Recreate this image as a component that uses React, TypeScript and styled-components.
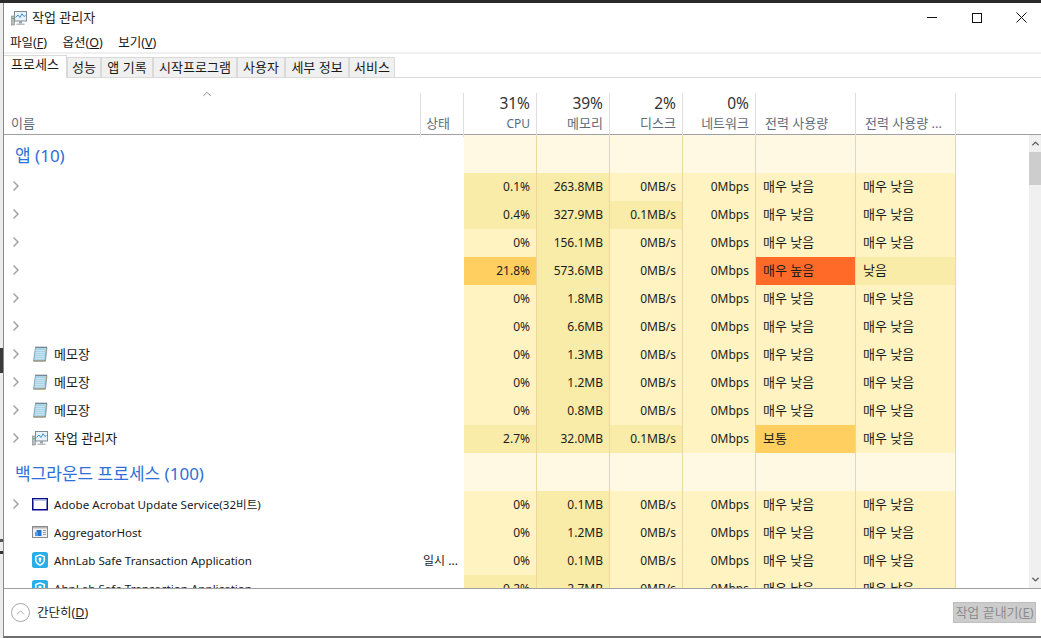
import React from "react";
import styled, { createGlobalStyle } from "styled-components";
import { ChevronRight, ChevronUp, ChevronDown } from "lucide-react";

const GlobalStyle = createGlobalStyle`
  html, body {
    margin: 0;
    padding: 0;
    background: #fff;
  }
  * {
    box-sizing: border-box;
  }
`;

const Screen = styled.div`
  width: 1041px;
  height: 638px;
  display: flex;
  overflow: hidden;
  font-family: "Noto Sans", "Noto Sans CJK KR", sans-serif;
  font-size: 12px;
  color: #1a1a1a;
  background: #2a2a2a;
  padding-top: 3px;
`;

const DesktopEdge = styled.div`
  width: 3px;
  flex: none;
  background: linear-gradient(
    to bottom,
    #ececec 0 345px,
    #3a3a3a 345px 370px,
    #ececec 370px 536px,
    #555 536px 539px,
    #ececec 539px 548px,
    #333 548px 551px,
    #ececec 551px
  );
`;

const Window = styled.div`
  flex: 1;
  min-width: 0;
  display: flex;
  flex-direction: column;
  background: #fff;
  border-left: 1px solid #8a8a8a;
  border-bottom: 2px solid #6e6e6e;
`;

const TitleBar = styled.div`
  height: 30px;
  flex: none;
  display: flex;
  align-items: center;
  padding-left: 7px;
`;

const TitleText = styled.span`
  margin: 0 0 4px 5px;
  font-size: 13px;
  color: #222;
`;

const WindowButtons = styled.div`
  margin: 0 -3px 2px auto;
  display: flex;
  align-items: center;
`;

const WindowButton = styled.div`
  width: 45px;
  height: 28px;
  display: flex;
  align-items: center;
  justify-content: center;
`;

const MenuBar = styled.div`
  height: 19px;
  flex: none;
  display: flex;
  align-items: center;
  gap: 15.5px;
  padding: 0 0 2px 6px;
  font-size: 12.5px;
`;

const MenuItem = styled.span`
  color: #1a1a1a;
`;

const Key = styled.span`
  text-decoration: underline;
`;

const TabStrip = styled.div`
  height: 26px;
  flex: none;
  display: flex;
  align-items: flex-end;
  border-top: 2px solid #f0f0f0;
  border-bottom: 1px solid #d9d9d9;
`;

const Tab = styled.div<{ $width: number; $active?: boolean }>`
  width: ${(p) => p.$width}px;
  height: ${(p) => (p.$active ? 23 : 20)}px;
  margin-bottom: ${(p) => (p.$active ? -1 : 0)}px;
  padding-bottom: ${(p) => (p.$active ? 0 : 2)}px;
  display: flex;
  align-items: ${(p) => (p.$active ? "flex-start" : "center")};
  justify-content: center;
  background: ${(p) => (p.$active ? "#fff" : "#f0f0f0")};
  border: 1px solid #d9d9d9;
  border-left-width: ${(p) => (p.$active ? 0 : 1)}px;
  border-bottom-width: 0;
  font-size: 13px;
  line-height: ${(p) => (p.$active ? 16 : 18)}px;
  white-space: nowrap;
  color: #1a1a1a;
`;

const Columns = styled.div`
  display: grid;
  grid-template-columns: 417px 43px 73px 73px 73px 73px 100px 100px 1fr;
`;

const Header = styled(Columns)`
  height: 57px;
  flex: none;
  padding-top: 15px;
  border-bottom: 1px solid #a0a0a0;
  position: relative;
`;

const SortCaret = styled.div`
  position: absolute;
  left: 196px;
  top: 9px;
  color: #7a8a9a;
  display: flex;
`;

const HeaderCell = styled.div<{ $left?: number; $right?: number; $plain?: boolean }>`
  display: flex;
  flex-direction: column;
  justify-content: flex-end;
  align-items: ${(p) => (p.$left ? "flex-start" : "flex-end")};
  padding: 0 ${(p) => p.$right ?? 6}px 5px ${(p) => p.$left ?? 0}px;
  border-right: ${(p) => (p.$plain ? "none" : "1px solid #dedede")};
`;

const HeaderPercent = styled.div`
  font-size: 15.5px;
  line-height: 20px;
  color: #333;
  margin-bottom: 2px;
`;

const HeaderLabel = styled.div<{ $latin?: boolean }>`
  font-size: ${(p) => (p.$latin ? 12 : 13)}px;
  line-height: 17px;
  color: #5f6b7a;
  white-space: nowrap;
`;

const Body = styled.div`
  flex: 1;
  min-height: 0;
  display: flex;
`;

const List = styled.div`
  flex: 1;
  min-width: 0;
  overflow: hidden;
`;

const GroupRow = styled(Columns)`
  height: 38px;
`;

const GroupTitle = styled.div`
  grid-column: 1 / 3;
  display: flex;
  align-items: center;
  padding-left: 11px;
  font-size: 17px;
  color: #2f6fd6;
`;

const Row = styled(Columns)`
  height: 28px;
`;

const NameCell = styled.div`
  display: flex;
  align-items: center;
  padding: 0 0 2px 6px;
  white-space: nowrap;
`;

const Chevron = styled.div<{ $hidden?: boolean }>`
  width: 13px;
  flex: none;
  display: flex;
  color: #a6a6a6;
  visibility: ${(p) => (p.$hidden ? "hidden" : "visible")};

  svg {
    flex: none;
    margin-left: -2.5px;
  }
`;

const IconSlot = styled.div`
  width: 16px;
  height: 16px;
  flex: none;
  margin-left: 9px;
  display: flex;
`;

const Name = styled.span<{ $korean?: boolean }>`
  margin: 0 0 ${(p) => (p.$korean ? 2 : 0)}px 6px;
  font-size: ${(p) => (p.$korean ? 13 : 11.6)}px;
`;

const StatusCell = styled.div`
  display: flex;
  align-items: center;
  padding: 0 0 2px 2px;
  font-size: 12px;
  white-space: nowrap;
`;

const DataCell = styled.div<{ $bg: string; $left?: boolean }>`
  display: flex;
  align-items: center;
  justify-content: ${(p) => (p.$left ? "flex-start" : "flex-end")};
  padding: ${(p) => (p.$left ? "0 0 4px 7px" : "0 6px 2px 0")};
  font-size: ${(p) => (p.$left ? 13 : 12)}px;
  background: ${(p) => p.$bg};
  border-right: 1px solid #ecd79c;
  white-space: nowrap;
  color: #1c1c1c;
`;

const Filler = styled.div``;

const ScrollBar = styled.div`
  width: 12px;
  flex: none;
  display: flex;
  flex-direction: column;
  background: #f0f0f0;
`;

const ScrollArrow = styled.div`
  height: 17px;
  flex: none;
  display: flex;
  align-items: center;
  justify-content: center;
  color: #555;
`;

const ScrollThumb = styled.div`
  height: 33px;
  flex: none;
  background: #cdcdcd;
`;

const ScrollTrack = styled.div`
  flex: 1;
`;

const Footer = styled.div`
  height: 48px;
  flex: none;
  display: flex;
  align-items: center;
  padding: 0 5px 0 7px;
  border-top: 1px solid #a0a0a0;
`;

const CollapseCircle = styled.div`
  width: 19px;
  height: 19px;
  border: 1px solid #a8a8a8;
  border-radius: 50%;
  display: flex;
  align-items: center;
  justify-content: center;
  color: #a0a0a0;
`;

const FooterLink = styled.span`
  margin: 0 0 2px 7px;
  font-size: 12.5px;
  color: #222;
`;

const EndButton = styled.div`
  margin-left: auto;
  width: 83px;
  height: 21px;
  display: flex;
  align-items: center;
  justify-content: center;
  padding-bottom: 2px;
  background: #cccccc;
  border: 1px solid #bfbfbf;
  color: #8c8c8c;
  font-size: 13px;
  white-space: nowrap;
`;

const BASE = "#fff3c2";
const WARM = "#f9eba8";
const MID = "#ffd05f";
const HOT = "#ff6a28";
const GROUP = "#fff8e2";

const MinimizeIcon = () => (
  <svg width="11" height="11" viewBox="0 0 11 11">
    <path d="M0.5 5.5 H10.5" stroke="#111" strokeWidth="1" shapeRendering="crispEdges" />
  </svg>
);

const MaximizeIcon = () => (
  <svg width="11" height="11" viewBox="0 0 11 11">
    <rect x="1" y="1" width="9" height="9" fill="none" stroke="#111" strokeWidth="1" shapeRendering="crispEdges" />
  </svg>
);

const CloseIcon = () => (
  <svg width="11" height="11" viewBox="0 0 11 11">
    <path d="M0.5 0.5 L10.5 10.5 M10.5 0.5 L0.5 10.5" stroke="#111" strokeWidth="1" />
  </svg>
);

const TaskIcon = () => (
  <svg width="16" height="16" viewBox="0 0 16 16">
    <rect x="0.5" y="6" width="3" height="9" fill="#b9bec2" stroke="#7d8488" strokeWidth="0.6" />
    <rect x="1.2" y="8" width="1.6" height="1.2" fill="#55b04a" />
    <rect x="3.5" y="1.5" width="12" height="9.5" fill="#e8f2fa" stroke="#7f8c96" />
    <path d="M4.5 7.5 L7 5 L9 7.5 L11 3.8 L13 6.5 L14.5 5.5" fill="none" stroke="#3a8fd0" strokeWidth="1" />
    <rect x="8" y="11" width="3" height="2.5" fill="#9aa3aa" />
    <rect x="5.5" y="13.5" width="8" height="1.5" fill="#b6bcc1" />
  </svg>
);

const NotepadIcon = () => (
  <svg width="16" height="16" viewBox="0 0 16 16">
    <path d="M3.5 1.5 H15 L13.5 15 H1.5 Z" fill="#a9d3e6" stroke="#5f8ea6" strokeWidth="0.7" />
    <path d="M14.2 2 L14.8 2 L13.4 15.2 L12.6 15.2 Z" fill="#b99868" />
    <path d="M1.6 15 H13.4" stroke="#a58a5f" strokeWidth="1" />
    <path d="M3.6 4.5 H12.8 M3.4 6.5 H12.6 M3.2 8.5 H12.4 M3 10.5 H12.2 M2.8 12.5 H12" stroke="#cfe7f1" strokeWidth="0.8" />
    <path d="M3.5 1.2 H14.8" stroke="#5a5a5a" strokeWidth="1.2" strokeDasharray="1 1" />
  </svg>
);

const FrameIcon = () => (
  <svg width="16" height="16" viewBox="0 0 16 16">
    <rect x="0.75" y="2.75" width="14.5" height="11" fill="#fff" stroke="#0a0a8c" strokeWidth="1.5" />
    <rect x="1.5" y="3.5" width="13" height="1.5" fill="#b9c6e6" />
  </svg>
);

const HostIcon = () => (
  <svg width="16" height="16" viewBox="0 0 16 16">
    <rect x="0.5" y="2.5" width="15" height="11" fill="#f2f2f2" stroke="#8a8a8a" />
    <rect x="1" y="3" width="14" height="1.5" fill="#b5b5b5" />
    <rect x="4.5" y="6" width="5" height="6" fill="#1e78d2" />
    <rect x="3" y="8" width="3" height="4" fill="#4aa3ea" />
    <path d="M11 6.5 H14 M11 8.5 H14 M11 10.5 H14" stroke="#9a9a9a" />
  </svg>
);

const ShieldIcon = () => (
  <svg width="16" height="16" viewBox="0 0 16 16">
    <rect x="0" y="0" width="16" height="16" rx="2.5" fill="#29aee8" />
    <path d="M8 2.2 L13 4 V8 C13 11 10.6 13 8 14 C5.4 13 3 11 3 8 V4 Z" fill="#fff" />
    <path d="M8 3.8 L11.5 5 V8 C11.5 10 10 11.5 8 12.4 C6 11.5 4.5 10 4.5 8 V5 Z" fill="#29aee8" />
    <circle cx="8" cy="7" r="1.5" fill="#fff" />
    <rect x="7.3" y="7.5" width="1.4" height="2.6" fill="#fff" />
  </svg>
);

type ProcessRow = {
  name?: string;
  korean?: boolean;
  icon?: React.ReactNode;
  noChevron?: boolean;
  status?: string;
  cpu: [string, string];
  mem: string;
  disk: [string, string];
  power: [string, string];
  trend: [string, string];
};

const LOW = "매우 낮음";

const low = (cpu: string, mem: string, icon?: React.ReactNode, name?: string): ProcessRow => ({
  name,
  icon,
  cpu: [cpu, BASE],
  mem,
  disk: ["0MB/s", BASE],
  power: [LOW, BASE],
  trend: [LOW, BASE],
});

const apps: ProcessRow[] = [
  { ...low("0.1%", "263.8MB"), cpu: ["0.1%", WARM] },
  { ...low("0.4%", "327.9MB"), cpu: ["0.4%", WARM], disk: ["0.1MB/s", WARM] },
  low("0%", "156.1MB"),
  {
    ...low("21.8%", "573.6MB"),
    cpu: ["21.8%", MID],
    power: ["매우 높음", HOT],
    trend: ["낮음", WARM],
  },
  low("0%", "1.8MB"),
  low("0%", "6.6MB"),
  { ...low("0%", "1.3MB", <NotepadIcon />, "메모장"), korean: true },
  { ...low("0%", "1.2MB", <NotepadIcon />, "메모장"), korean: true },
  { ...low("0%", "0.8MB", <NotepadIcon />, "메모장"), korean: true },
  {
    ...low("2.7%", "32.0MB", <TaskIcon />, "작업 관리자"),
    korean: true,
    cpu: ["2.7%", WARM],
    disk: ["0.1MB/s", WARM],
    power: ["보통", MID],
  },
];

const background: ProcessRow[] = [
  low("0%", "0.1MB", <FrameIcon />, "Adobe Acrobat Update Service(32비트)"),
  { ...low("0%", "1.2MB", <HostIcon />, "AggregatorHost"), noChevron: true },
  {
    ...low("0%", "0.1MB", <ShieldIcon />, "AhnLab Safe Transaction Application"),
    noChevron: true,
    status: "일시 ...",
  },
  {
    ...low("0.2%", "2.7MB", <ShieldIcon />, "AhnLab Safe Transaction Application"),
    cpu: ["0.2%", WARM],
    noChevron: true,
  },
];

const tabs: [string, number][] = [
  ["성능", 34],
  ["앱 기록", 52],
  ["시작프로그램", 84],
  ["사용자", 48],
  ["세부 정보", 64],
  ["서비스", 46],
];

const Group = ({ title }: { title: string }) => (
  <GroupRow>
    <GroupTitle>{title}</GroupTitle>
    {[0, 1, 2, 3, 4, 5].map((i) => (
      <DataCell key={i} $bg={GROUP} />
    ))}
    <Filler />
  </GroupRow>
);

const ProcessLine = ({ row }: { row: ProcessRow }) => (
  <Row>
    <NameCell>
      <Chevron $hidden={row.noChevron}>
        <ChevronRight size={16} strokeWidth={2.6} />
      </Chevron>
      {row.icon && <IconSlot>{row.icon}</IconSlot>}
      {row.name && <Name $korean={row.korean}>{row.name}</Name>}
    </NameCell>
    <StatusCell>{row.status}</StatusCell>
    <DataCell $bg={row.cpu[1]}>{row.cpu[0]}</DataCell>
    <DataCell $bg={WARM}>{row.mem}</DataCell>
    <DataCell $bg={row.disk[1]}>{row.disk[0]}</DataCell>
    <DataCell $bg={BASE}>0Mbps</DataCell>
    <DataCell $bg={row.power[1]} $left>
      {row.power[0]}
    </DataCell>
    <DataCell $bg={row.trend[1]} $left>
      {row.trend[0]}
    </DataCell>
    <Filler />
  </Row>
);

export default function App() {
  return (
    <Screen>
      <GlobalStyle />
      <DesktopEdge />
      <Window>
        <TitleBar>
          <TaskIcon />
          <TitleText>작업 관리자</TitleText>
          <WindowButtons>
            <WindowButton>
              <MinimizeIcon />
            </WindowButton>
            <WindowButton>
              <MaximizeIcon />
            </WindowButton>
            <WindowButton>
              <CloseIcon />
            </WindowButton>
          </WindowButtons>
        </TitleBar>
        <MenuBar>
          <MenuItem>
            파일(<Key>F</Key>)
          </MenuItem>
          <MenuItem>
            옵션(<Key>O</Key>)
          </MenuItem>
          <MenuItem>
            보기(<Key>V</Key>)
          </MenuItem>
        </MenuBar>
        <TabStrip>
          <Tab $width={63} $active>
            프로세스
          </Tab>
          {tabs.map(([label, width]) => (
            <Tab key={label} $width={width}>
              {label}
            </Tab>
          ))}
        </TabStrip>
        <Header>
          <SortCaret>
            <ChevronUp size={14} strokeWidth={1.6} />
          </SortCaret>
          <HeaderCell $left={7}>
            <HeaderLabel>이름</HeaderLabel>
          </HeaderCell>
          <HeaderCell $right={13}>
            <HeaderLabel>상태</HeaderLabel>
          </HeaderCell>
          <HeaderCell>
            <HeaderPercent>31%</HeaderPercent>
            <HeaderLabel $latin>CPU</HeaderLabel>
          </HeaderCell>
          <HeaderCell>
            <HeaderPercent>39%</HeaderPercent>
            <HeaderLabel>메모리</HeaderLabel>
          </HeaderCell>
          <HeaderCell>
            <HeaderPercent>2%</HeaderPercent>
            <HeaderLabel>디스크</HeaderLabel>
          </HeaderCell>
          <HeaderCell>
            <HeaderPercent>0%</HeaderPercent>
            <HeaderLabel>네트워크</HeaderLabel>
          </HeaderCell>
          <HeaderCell $left={9}>
            <HeaderLabel>전력 사용량</HeaderLabel>
          </HeaderCell>
          <HeaderCell $left={9}>
            <HeaderLabel>전력 사용량 ...</HeaderLabel>
          </HeaderCell>
          <HeaderCell $plain />
        </Header>
        <Body>
          <List>
            <Group title="앱 (10)" />
            {apps.map((row, i) => (
              <ProcessLine key={i} row={row} />
            ))}
            <Group title="백그라운드 프로세스 (100)" />
            {background.map((row, i) => (
              <ProcessLine key={i} row={row} />
            ))}
          </List>
          <ScrollBar>
            <ScrollArrow>
              <ChevronUp size={11} strokeWidth={3} />
            </ScrollArrow>
            <ScrollThumb />
            <ScrollTrack />
            <ScrollArrow>
              <ChevronDown size={11} strokeWidth={3} />
            </ScrollArrow>
          </ScrollBar>
        </Body>
        <Footer>
          <CollapseCircle>
            <ChevronUp size={13} strokeWidth={1.6} />
          </CollapseCircle>
          <FooterLink>
            간단히(<Key>D</Key>)
          </FooterLink>
          <EndButton>
            작업 끝내기(<Key>E</Key>)
          </EndButton>
        </Footer>
      </Window>
    </Screen>
  );
}
